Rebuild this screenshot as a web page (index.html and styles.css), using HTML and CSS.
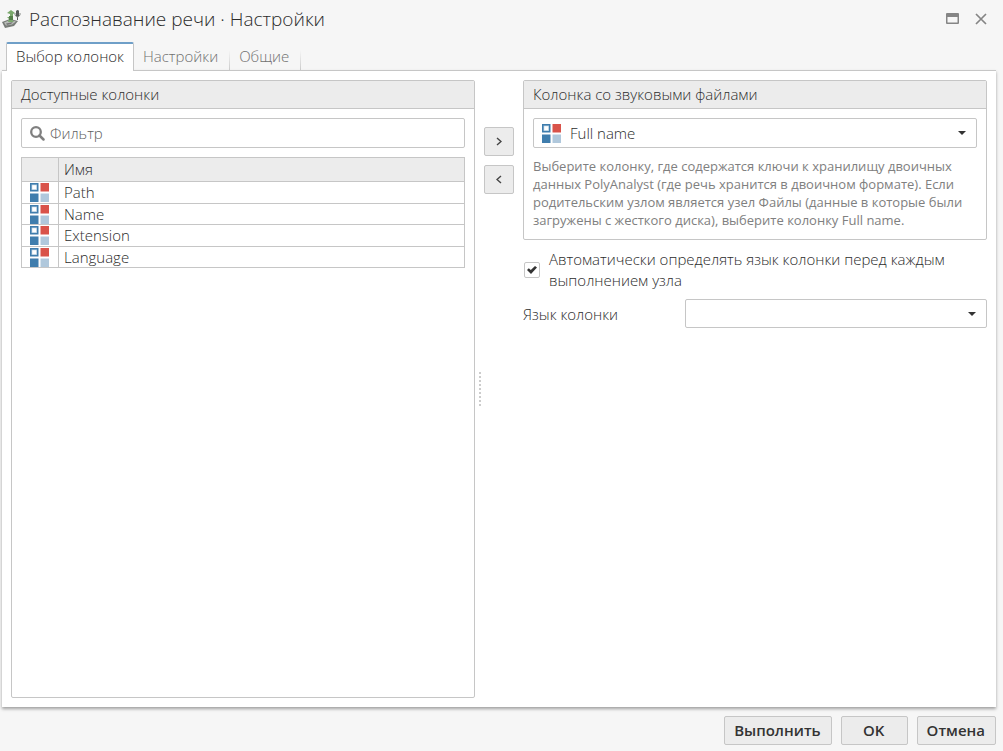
FILE: index.html
```html
<!DOCTYPE html>
<html lang="ru">
<head>
<meta charset="utf-8">
<meta name="viewport" content="width=device-width, initial-scale=1">
<title>Распознавание речи · Настройки</title>
<link rel="stylesheet" href="styles.css">
</head>
<body class="dialog">
<svg class="defs" aria-hidden="true">
  <symbol id="column" viewBox="0 0 19 19">
    <path fill="#3f7dad" d="M0 0h8.500v8.500H0zM0 10.500h8.500V19H0z"/>
    <path fill="#a9c6dc" d="M1.500 1.500h5.500v5.500H1.500z"/>
    <path fill="#fff" d="M2.200 2.200h4.100v4.100H2.200z"/>
    <path fill="#d9534a" d="M10.500 0H19v8.500h-8.500z"/>
    <path fill="#b0c8dc" d="M10.500 10.500H19V19h-8.500z"/>
  </symbol>
  <symbol id="caret" viewBox="0 0 8 4"><path fill="#333" d="M0 0h8L4 4z"/></symbol>
</svg>
<header class="titlebar">
  <svg class="app-icon" viewBox="0 0 20 20" aria-hidden="true">
    <path fill="#777b77" d="M0 13l8-3 8 2-4 5-9 2z"/>
    <path fill="#b9bdb9" d="M2 13.500l6-2.500 6 1.500-4 3-6 1z"/>
    <path fill="#777" d="M4 14.500l7-1.500-2 2-4 1z"/>
    <path fill="#7aa86c" d="M9 1l4 3-2 1v3H8V5L5 4zM5 8h6l-1 3 2 2H6l1-3z"/>
    <path fill="#55804b" d="M7 7h4v4H7z"/>
    <path fill="#555b59" d="M14 2q2-2 3 0v5q-1 2-3 0zM15 7h1v4h-1z"/>
    <path stroke="#858a85" fill="none" d="M13 4v2q2.500 4 5 0V4"/>
  </svg>
  <h1 class="title">Распознавание речи · Настройки</h1>
  <button class="window-button" type="button" aria-label="Развернуть">
    <svg width="13" height="12" viewBox="0 0 13 12"><path fill="#858585" fill-rule="evenodd" d="M0 1q0-1 1-1h11q1 0 1 1v9q0 1-1 1H1q-1 0-1-1zM1.500 4v5.500h10V4z"/></svg>
  </button>
  <button class="window-button" type="button" aria-label="Закрыть">
    <svg width="12" height="12" viewBox="0 0 12 12"><path stroke="#858585" stroke-width="1.700" d="M1 1l10 10M11 1L1 11"/></svg>
  </button>
</header>
<nav class="tabs" role="tablist">
  <button class="tab tab-active" type="button" role="tab" aria-selected="true">Выбор колонок</button>
  <button class="tab" type="button" role="tab" aria-selected="false">Настройки</button>
  <button class="tab" type="button" role="tab" aria-selected="false">Общие</button>
</nav>
<main class="page">
  <section class="panel">
    <h2 class="panel-title">Доступные колонки</h2>
    <div class="panel-body">
      <label class="field">
        <svg class="search-icon" viewBox="0 0 15 15" aria-hidden="true"><circle cx="6" cy="6" r="4.800" fill="none" stroke="#808080" stroke-width="2.300"/><path d="M9.500 9.500l4 4" stroke="#808080" stroke-width="2.500" stroke-linecap="round"/></svg>
        <input class="filter" type="text" placeholder="Фильтр" aria-label="Фильтр">
      </label>
      <table class="columns">
        <thead><tr><th class="icon-cell"></th><th>Имя</th></tr></thead>
        <tbody>
          <tr><td class="icon-cell"><svg class="column-icon"><use href="#column"/></svg></td><td>Path</td></tr>
          <tr><td class="icon-cell"><svg class="column-icon"><use href="#column"/></svg></td><td>Name</td></tr>
          <tr><td class="icon-cell"><svg class="column-icon"><use href="#column"/></svg></td><td>Extension</td></tr>
          <tr><td class="icon-cell"><svg class="column-icon"><use href="#column"/></svg></td><td>Language</td></tr>
        </tbody>
      </table>
    </div>
  </section>
  <div class="transfer">
    <button class="move" type="button" aria-label="Добавить"><svg width="6" height="9" viewBox="0 0 6 9"><path d="M1 1l4 3.500L1 8" fill="none" stroke="#444" stroke-width="1.400"/></svg></button>
    <button class="move" type="button" aria-label="Убрать"><svg width="6" height="9" viewBox="0 0 6 9"><path d="M5 1L1 4.500 5 8" fill="none" stroke="#444" stroke-width="1.400"/></svg></button>
    <div class="splitter"></div>
  </div>
  <div class="options">
    <section class="panel">
      <h2 class="panel-title">Колонка со звуковыми файлами</h2>
      <div class="panel-body">
        <div class="field">
          <svg class="column-icon"><use href="#column"/></svg>
          <select class="choice" aria-label="Колонка со звуковыми файлами"><option>Full name</option></select>
          <svg class="caret" aria-hidden="true"><use href="#caret"/></svg>
        </div>
        <p class="hint">Выберите колонку, где содержатся ключи к хранилищу двоичных данных PolyAnalyst (где речь хранится в двоичном формате). Если родительским узлом является узел Файлы (данные в которые были загружены с жесткого диска), выберите колонку Full name.</p>
      </div>
    </section>
    <div class="check-row">
      <input class="check" type="checkbox" id="auto" checked>
      <label for="auto">Автоматически определять язык колонки перед каждым выполнением узла</label>
    </div>
    <div class="language-row">
      <label for="language">Язык колонки</label>
      <div class="field">
        <select class="choice" id="language"><option></option></select>
        <svg class="caret" aria-hidden="true"><use href="#caret"/></svg>
      </div>
    </div>
  </div>
</main>
<footer class="footer">
  <button class="action" type="button">Выполнить</button>
  <button class="action action-ok" type="button">OK</button>
  <button class="action" type="button">Отмена</button>
</footer>
</body>
</html>
```
FILE: styles.css
```css
*, *::before, *::after { box-sizing: border-box; }
.dialog {
  margin: 0;
  min-height: 100vh;
  display: flex;
  flex-direction: column;
  background: #f6f6f6;
  color: #2c2c2c;
  font: 300 15px/20px "Open Sans", "Noto Sans", sans-serif;
}
button, input, select { font: inherit; color: inherit; }
svg { display: block; flex: none; }
.defs { position: absolute; width: 0; height: 0; }

.titlebar { display: flex; align-items: center; height: 42px; padding: 0 14px 4px 2px; }
.app-icon { width: 20px; height: 20px; }
.title { flex: 1; margin: 0 0 0 7px; font-size: 19px; line-height: 24px; font-weight: 300; }
.window-button {
  display: grid;
  place-items: center;
  width: 16px;
  height: 20px;
  margin-left: 13px;
  padding: 0;
  border: 0;
  background: none;
}

.tabs { display: flex; height: 29px; padding-left: 6px; margin-bottom: -1px; z-index: 1; }
.tab {
  padding: 0 11px 2px 9px;
  border: 0;
  border-right: 1px solid;
  border-image: linear-gradient(transparent 30%, #c6c6c6) 1;
  background: none;
  color: #707070;
}
.tab-active {
  border: 1px solid #c6c6c6;
  border-top: 2px solid #6f9fc8;
  border-bottom: 0;
  border-image: none;
  border-radius: 2px 2px 0 0;
  padding: 0 9px 3px;
  background: #fff;
  color: #2c2c2c;
}

.page {
  flex: 1;
  display: grid;
  grid-template-columns: 1fr 48px 1fr;
  margin: 0 7px 0 2px;
  padding: 9px;
  border-top: 1px solid #c6c6c6;
  background: #fff;
  box-shadow: 0 2px 3px rgba(0, 0, 0, .35);
}
.panel { border: 1px solid #c6c6c6; border-radius: 2px; }
.panel-title {
  margin: 0;
  padding: 3px 9px 4px;
  border-bottom: 1px solid #c6c6c6;
  background: #ececec;
  font-size: 15px;
  font-weight: 300;
}
.panel-body { padding: 9px; }
.field {
  display: flex;
  align-items: center;
  height: 30px;
  padding: 0 9px 0 8px;
  border: 1px solid #c6c6c6;
  border-radius: 2px;
  background: #fff;
}
.search-icon { width: 15px; height: 15px; }
.filter { flex: 1; min-width: 0; padding: 0 5px; border: 0; outline: 0; background: none; }
.filter::placeholder { color: #606060; opacity: 1; }

.columns { width: 100%; margin-top: 9px; border-collapse: collapse; }
.columns th, .columns td { padding: 0 5px; border: 1px solid #c6c6c6; text-align: left; font-weight: 300; }
.columns th { height: 24px; padding-bottom: 1px; background: #ececec; }
.columns td { height: 21px; vertical-align: top; }
.columns tr:nth-child(odd) td { height: 22px; }
.columns .icon-cell { width: 37px; padding: 0 8px; vertical-align: middle; }
.column-icon { width: 19px; height: 19px; }

.transfer { display: flex; flex-direction: column; align-items: center; gap: 9px; padding-top: 47px; }
.move {
  display: grid;
  place-items: center;
  width: 30px;
  height: 29px;
  padding: 0;
  border: 1px solid #c6c6c6;
  border-radius: 2px;
  background: #ececec;
}
.splitter { align-self: flex-start; width: 2px; height: 34px; margin: 169px 0 0 4px; background: repeating-linear-gradient(#ccc 0 2px, transparent 2px 4px); }

.choice { flex: 1; min-width: 0; height: 26px; padding: 0 9px; border: 0; outline: 0; appearance: none; background: none; }
.caret { width: 8px; height: 4px; margin-right: 1px; }
.hint { margin: 9px 0 1px; color: #808080; font-size: 13px; line-height: 18px; font-weight: 400; }
.check-row { display: grid; grid-template-columns: 16px 1fr; align-items: center; column-gap: 9px; padding-left: 1px; margin-top: 9px; line-height: 21px; }
.check {
  appearance: none;
  display: grid;
  place-items: center;
  width: 16px;
  height: 16px;
  margin: 0;
  border: 1px solid #c6c6c6;
  border-radius: 2px;
  background: #fff;
}
.check:checked::before {
  content: "";
  width: 10px;
  height: 8px;
  background: #333;
  clip-path: polygon(0 50%, 18% 28%, 38% 50%, 80% 0, 100% 20%, 40% 100%);
}
.language-row { display: grid; grid-template-columns: 35fr 65fr; align-items: center; margin-top: 8px; }
.language-row .field { height: 29px; }

.footer { display: flex; justify-content: flex-end; gap: 9px; padding: 9px 7px 6px; }
.action {
  height: 29px;
  padding: 0 10px 1px 9px;
  border: 1px solid #c6c6c6;
  border-radius: 2px;
  background: #ececec;
  color: #333;
  font-weight: 600;
}
.action-ok { min-width: 67px; }
```
